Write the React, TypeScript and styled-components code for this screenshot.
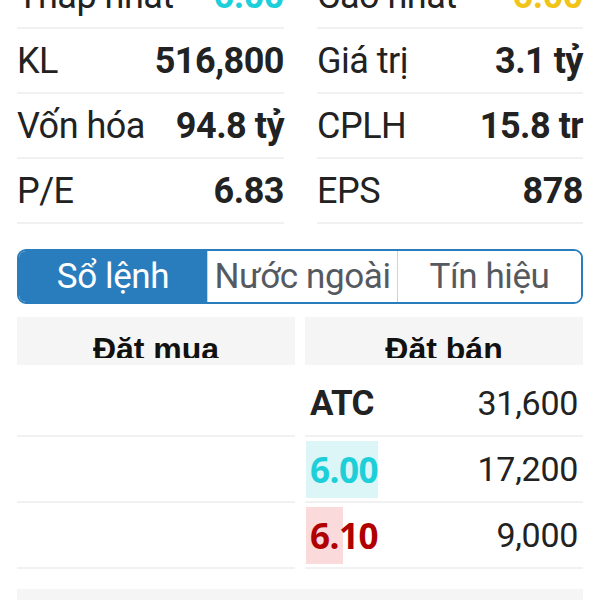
import styled, { createGlobalStyle } from 'styled-components'

const GlobalStyle = createGlobalStyle`
    body {
        margin: 0;
        background: #ffffff;
        font-family: Roboto, 'Noto Sans', sans-serif;
        color: #222222;
    }
`

const Page = styled.div`
    width: 566px;
    margin: -36px auto 0;
`

const StatsGrid = styled.div`
    display: grid;
    grid-template-columns: 267px 266px;
    column-gap: 33px;
`

const StatRow = styled.div`
    display: flex;
    align-items: center;
    justify-content: space-between;
    height: 63px;
    border-bottom: 2px solid #f1f1f1;
`

const StatLabel = styled.span`
    font-size: 36px;
    letter-spacing: -0.5px;
    font-weight: 400;
    color: #222222;
    white-space: nowrap;
`

const StatValue = styled.span<{ $color?: string }>`
    font-size: 36px;
    letter-spacing: -0.5px;
    font-weight: 700;
    color: ${(p) => p.$color ?? '#222222'};
    white-space: nowrap;
`

const Tabs = styled.div`
    display: grid;
    grid-template-columns: 188px 190px 1fr;
    height: 55px;
    margin-top: 25px;
    border: 2px solid #2a7dbd;
    border-radius: 9px;
    overflow: hidden;
    box-sizing: border-box;
`

const Tab = styled.div<{ $active?: boolean }>`
    display: flex;
    align-items: center;
    justify-content: center;
    font-size: 35px;
    letter-spacing: -0.4px;
    white-space: nowrap;
    color: ${(p) => (p.$active ? '#ffffff' : '#555a60')};
    background: ${(p) => (p.$active ? '#2a7dbd' : '#ffffff')};
    & + & {
        border-left: 1px solid #c9d4dc;
    }
`

const Book = styled.div`
    display: grid;
    grid-template-columns: 278px 278px;
    column-gap: 10px;
    margin-top: 13px;
`

const Side = styled.div`
    display: flex;
    flex-direction: column;
`

const SideHeader = styled.div`
    height: 48px;
    margin-bottom: 6px;
    background: #f5f5f5;
    display: flex;
    justify-content: center;
    align-items: flex-start;
    padding-top: 16px;
    box-sizing: border-box;
`

const SideTitle = styled.span`
    display: block;
    height: 25px;
    overflow: hidden;
    font-family: 'Liberation Sans', Arial, sans-serif;
    font-size: 32px;
    line-height: 32px;
    font-weight: 700;
    color: #111111;
`

const BookRow = styled.div`
    display: flex;
    align-items: center;
    justify-content: space-between;
    height: 64px;
    border-bottom: 2px solid #f1f1f1;
    padding: 0 5px 0 1px;
`

const Price = styled.span<{ $color: string; $plain: boolean }>`
    position: relative;
    display: inline-flex;
    align-items: center;
    height: 57px;
    padding: 0 0 0 4px;
    font-family: ${(p) => (p.$plain ? 'Roboto' : "'Open Sans'")}, sans-serif;
    font-size: 35px;
    letter-spacing: -0.5px;
    font-weight: 700;
    color: ${(p) => p.$color};
`

const PriceBar = styled.span<{ $bg: string }>`
    position: absolute;
    left: 0;
    top: 0;
    bottom: 0;
    background: ${(p) => p.$bg};
`

const PriceText = styled.span`
    position: relative;
`

const Qty = styled.span`
    font-size: 34px;
    letter-spacing: -0.3px;
    color: #222222;
`

const Footer = styled.div`
    height: 14px;
    margin-top: 20px;
    background: #f5f5f5;
`

const stats: [string, string, string?][] = [
    ['Thấp nhất', '6.00', '#1ccfd8'],
    ['Cao nhất', '6.00', '#f0c419'],
    ['KL', '516,800'],
    ['Giá trị', '3.1 tỷ'],
    ['Vốn hóa', '94.8 tỷ'],
    ['CPLH', '15.8 tr'],
    ['P/E', '6.83'],
    ['EPS', '878'],
]

const asks = [
    { price: 'ATC', qty: 31600, color: '#222222', bg: '' },
    { price: '6.00', qty: 17200, color: '#1ccfd8', bg: '#dcf6f7' },
    { price: '6.10', qty: 9000, color: '#b00000', bg: '#fadadb' },
]

const maxQty = 17200

export default function App() {
    return (
        <>
            <GlobalStyle />
            <Page>
                <StatsGrid>
                    {stats.map(([label, value, color]) => (
                        <StatRow key={label}>
                            <StatLabel>{label}</StatLabel>
                            <StatValue $color={color}>{value}</StatValue>
                        </StatRow>
                    ))}
                </StatsGrid>

                <Tabs>
                    <Tab $active>Sổ lệnh</Tab>
                    <Tab>Nước ngoài</Tab>
                    <Tab>Tín hiệu</Tab>
                </Tabs>

                <Book>
                    <Side>
                        <SideHeader>
                            <SideTitle>Đặt mua</SideTitle>
                        </SideHeader>
                        {asks.map((a) => (
                            <BookRow key={a.price} />
                        ))}
                    </Side>
                    <Side>
                        <SideHeader>
                            <SideTitle>Đặt bán</SideTitle>
                        </SideHeader>
                        {asks.map((a) => (
                            <BookRow key={a.price}>
                                <Price $color={a.color} $plain={!a.bg}>
                                    {a.bg && (
                                        <PriceBar
                                            $bg={a.bg}
                                            style={{ width: `${Math.round((a.qty / maxQty) * 100)}%` }}
                                        />
                                    )}
                                    <PriceText>{a.price}</PriceText>
                                </Price>
                                <Qty>{a.qty.toLocaleString('en-US')}</Qty>
                            </BookRow>
                        ))}
                    </Side>
                </Book>
                <Footer />
            </Page>
        </>
    )
}
